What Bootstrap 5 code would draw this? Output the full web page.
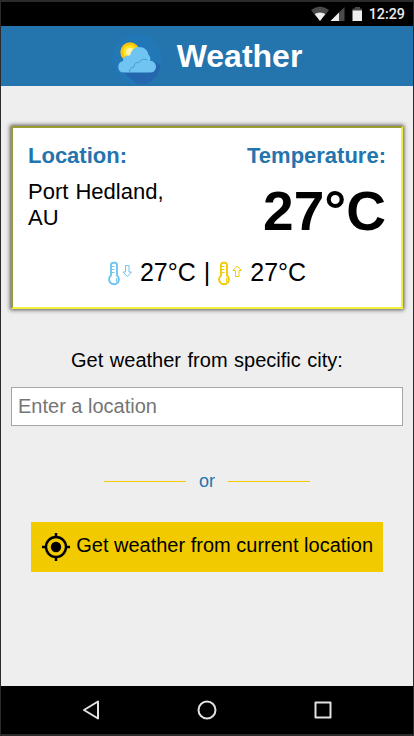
<!DOCTYPE html>
<html lang="en">
<head>
<meta charset="utf-8">
<meta name="viewport" content="width=device-width, initial-scale=1">
<title>Weather</title>
<link href="https://cdn.jsdelivr.net/npm/bootstrap@5.3.0/dist/css/bootstrap.min.css" rel="stylesheet">
<style>
  html, body { height: 100%; overflow: hidden; }
  body { font-family: "Liberation Sans", Arial, sans-serif; color: #000; }
  .device { height: 736px; background: #eee; border: solid #2b2b2b; border-width: 2px 1px; }
  .statusbar { height: 24px; background: #000; color: #ebebeb; font: 500 14.300px/26px Roboto, sans-serif; padding-right: 8px; }
  .status-icons { margin-right: 6px; }
  .app-header { height: 60px; background: #2474ad; }
  .app-header h1 { font-size: 32px; line-height: 60px; }
  .logo { margin: 8px 15px 0 0; }
  .content { padding: 40px 10px 0; }
  .weather-panel { height: 183px; background: #fff; border: 2px solid; border-color: #9a9b33 #f0f040 #f0f040 #9a9b33; box-shadow: 0 0 4px 1px #555; padding: 15px 15px 0; }
  .blue { color: #2474ad; }
  .panel-title { font-size: 22px; line-height: 26px; }
  .place { font-size: 22px; line-height: 26px; margin-top: 10px; word-spacing: 1px; }
  .temp { font-size: 55px; line-height: 64px; margin-top: 10px; }
  .range { font-size: 25px; line-height: 30px; margin-top: 14px; }
  .thermo { margin: 3px 7px 0 0; }
  .bar { margin: 0 8px; }
  .city-label { font-size: 20px; line-height: 24px; word-spacing: 1px; margin-top: 39px; }
  .city-input { height: 39px; margin-top: 15px; padding: 0 6px; font-size: 20px; border: 1px solid #a6a6a6; }
  .city-input::placeholder { color: #757575; }
  .divider { font-size: 18px; line-height: 22px; margin-top: 44px; gap: 13px; }
  .rule { width: 82px; height: 1px; background: #f1cb00; }
  .locate { width: 352px; height: 50px; margin-top: 30px; background: #f1cb00; font-size: 20px; line-height: 24px; padding: 0 10px 0 11px; }
  .locate span { margin-top: -4px; }
  .softkeys { height: 48px; background: #000; }
</style>
<script src="https://cdn.jsdelivr.net/npm/bootstrap@5.3.0/dist/js/bootstrap.bundle.min.js"></script>
</head>
<body>
<div class="device d-flex flex-column">
  <div class="statusbar d-flex justify-content-end align-items-center flex-shrink-0">
    <svg class="status-icons" width="52" height="16" viewBox="0 0 52 16">
      <path d="M0 4Q9-3 18 4L9 15Z" fill="#4a4a4a"/>
      <path d="M3.600 8Q9 4.800 14.400 8L9 15Z" fill="#ededed"/>
      <path d="M33.500 1V15H19.500Z" fill="#4a4a4a"/>
      <path d="M28 6.500V15H19.500Z" fill="#ededed"/>
      <path d="M44 1h5v1.500h2V5h-9.500V2.500h2.500Z" fill="#4a4a4a"/>
      <path d="M41.500 4.500h9.500V15h-9.500Z" fill="#ededed"/>
    </svg>
    <span>12:29</span>
  </div>

  <header class="app-header d-flex justify-content-center flex-shrink-0 text-white">
    <svg class="logo flex-shrink-0" width="50" height="52" viewBox="0 0 50 52">
      <circle cx="25" cy="25" r="25" fill="#2277b6"/>
      <path d="M43 28 49 32Q46 43 36 49Q31 51 25 50L8 36Z" fill="#2467ae"/>
      <circle cx="18" cy="18" r="9.700" fill="#fbc40b"/>
      <circle cx="18" cy="18" r="7" fill="#ffe51f"/>
      <circle cx="18" cy="18" r="4" fill="#fff5ae"/>
      <path d="M12 38.500Q6.300 38.500 6.300 33Q6.300 28 11 27Q11 21 18 21.500Q20 13 27 13Q35 13 36.500 21Q39 22.500 38 26.500Q44 27.500 44 33Q43.500 38.500 38 38.500Z" fill="#70c4f2"/>
      <path d="M17.500 38Q17.500 33.500 22 33Q22 28 27 28.500Q30 23.500 35.500 26" fill="none" stroke="#439fd5"/>
    </svg>
    <h1 class="fw-bold mb-0">Weather</h1>
  </header>

  <main class="content flex-grow-1">
    <section class="weather-panel">
      <div class="d-flex justify-content-between">
        <div>
          <div class="panel-title blue fw-bold">Location:</div>
          <div class="place">Port Hedland,<br>AU</div>
        </div>
        <div class="text-end">
          <div class="panel-title blue fw-bold">Temperature:</div>
          <div class="temp fw-bold">27°C</div>
        </div>
      </div>
      <div class="range d-flex justify-content-center align-items-center">
        <svg class="thermo" width="25" height="26" viewBox="0 0 25 26" fill="none" stroke="#70c4f2">
          <path d="M3 14.500V4a2.400 2.400 0 0 1 2.400-2.200h1.200A2.400 2.400 0 0 1 9 4v10.500a4.900 4.900 0 1 1-6 0Z" stroke-width="1.900"/>
          <path d="M6.500 5.500H3.500M6.500 8.500H3.500M6.500 11.500H3.500M8.500 17Q9.500 19 8 20.500" stroke-width="1.200"/>
          <path d="M17.500 4.500h3.500v6.500h2.500l-4.200 4.500-4.300-4.500h2.500Z"/>
        </svg>
        <span>27°C</span><span class="bar">|</span>
        <svg class="thermo" width="25" height="26" viewBox="0 0 25 26" fill="none" stroke="#f1cb00">
          <path d="M3 14.500V4a2.400 2.400 0 0 1 2.400-2.200h1.200A2.400 2.400 0 0 1 9 4v10.500a4.900 4.900 0 1 1-6 0Z" stroke-width="1.900"/>
          <path d="M6.500 5.500H3.500M6.500 8.500H3.500M6.500 11.500H3.500M8.500 17Q9.500 19 8 20.500" stroke-width="1.200"/>
          <path d="M17.500 15.500h3.500v-6h2.500l-4.200-4.500-4.300 4.500h2.500Z"/>
        </svg>
        <span>27°C</span>
      </div>
    </section>

    <label class="city-label d-block text-center" for="city">Get weather from specific city:</label>
    <input class="city-input form-control rounded-0" id="city" type="text" placeholder="Enter a location">

    <div class="divider blue d-flex justify-content-center align-items-center">
      <span class="rule"></span><span>or</span><span class="rule"></span>
    </div>

    <button class="locate btn rounded-0 border-0 d-flex align-items-center justify-content-between mx-auto text-black" type="button">
      <svg width="28" height="28" viewBox="0 0 28 28" fill="none" stroke="#000">
        <circle cx="14" cy="14" r="10" stroke-width="2.400"/>
        <circle cx="14" cy="14" r="5.200" fill="#000" stroke="none"/>
        <path d="M14 0v4M14 24v4M0 14h4M24 14h4" stroke-width="2.500"/>
      </svg>
      <span class="text-nowrap">Get weather from current location</span>
    </button>
  </main>

  <nav class="softkeys d-flex justify-content-center align-items-center flex-shrink-0" aria-label="System">
    <svg width="250" height="24" viewBox="0 0 250 24" fill="none" stroke="#e2e2e2" stroke-width="2" stroke-linejoin="round">
      <path d="M16 3.500V20.500L2 12Z"/>
      <circle cx="125" cy="12" r="8.500"/>
      <rect x="233.500" y="4.500" width="15" height="15"/>
    </svg>
  </nav>
</div>
</body>
</html>
